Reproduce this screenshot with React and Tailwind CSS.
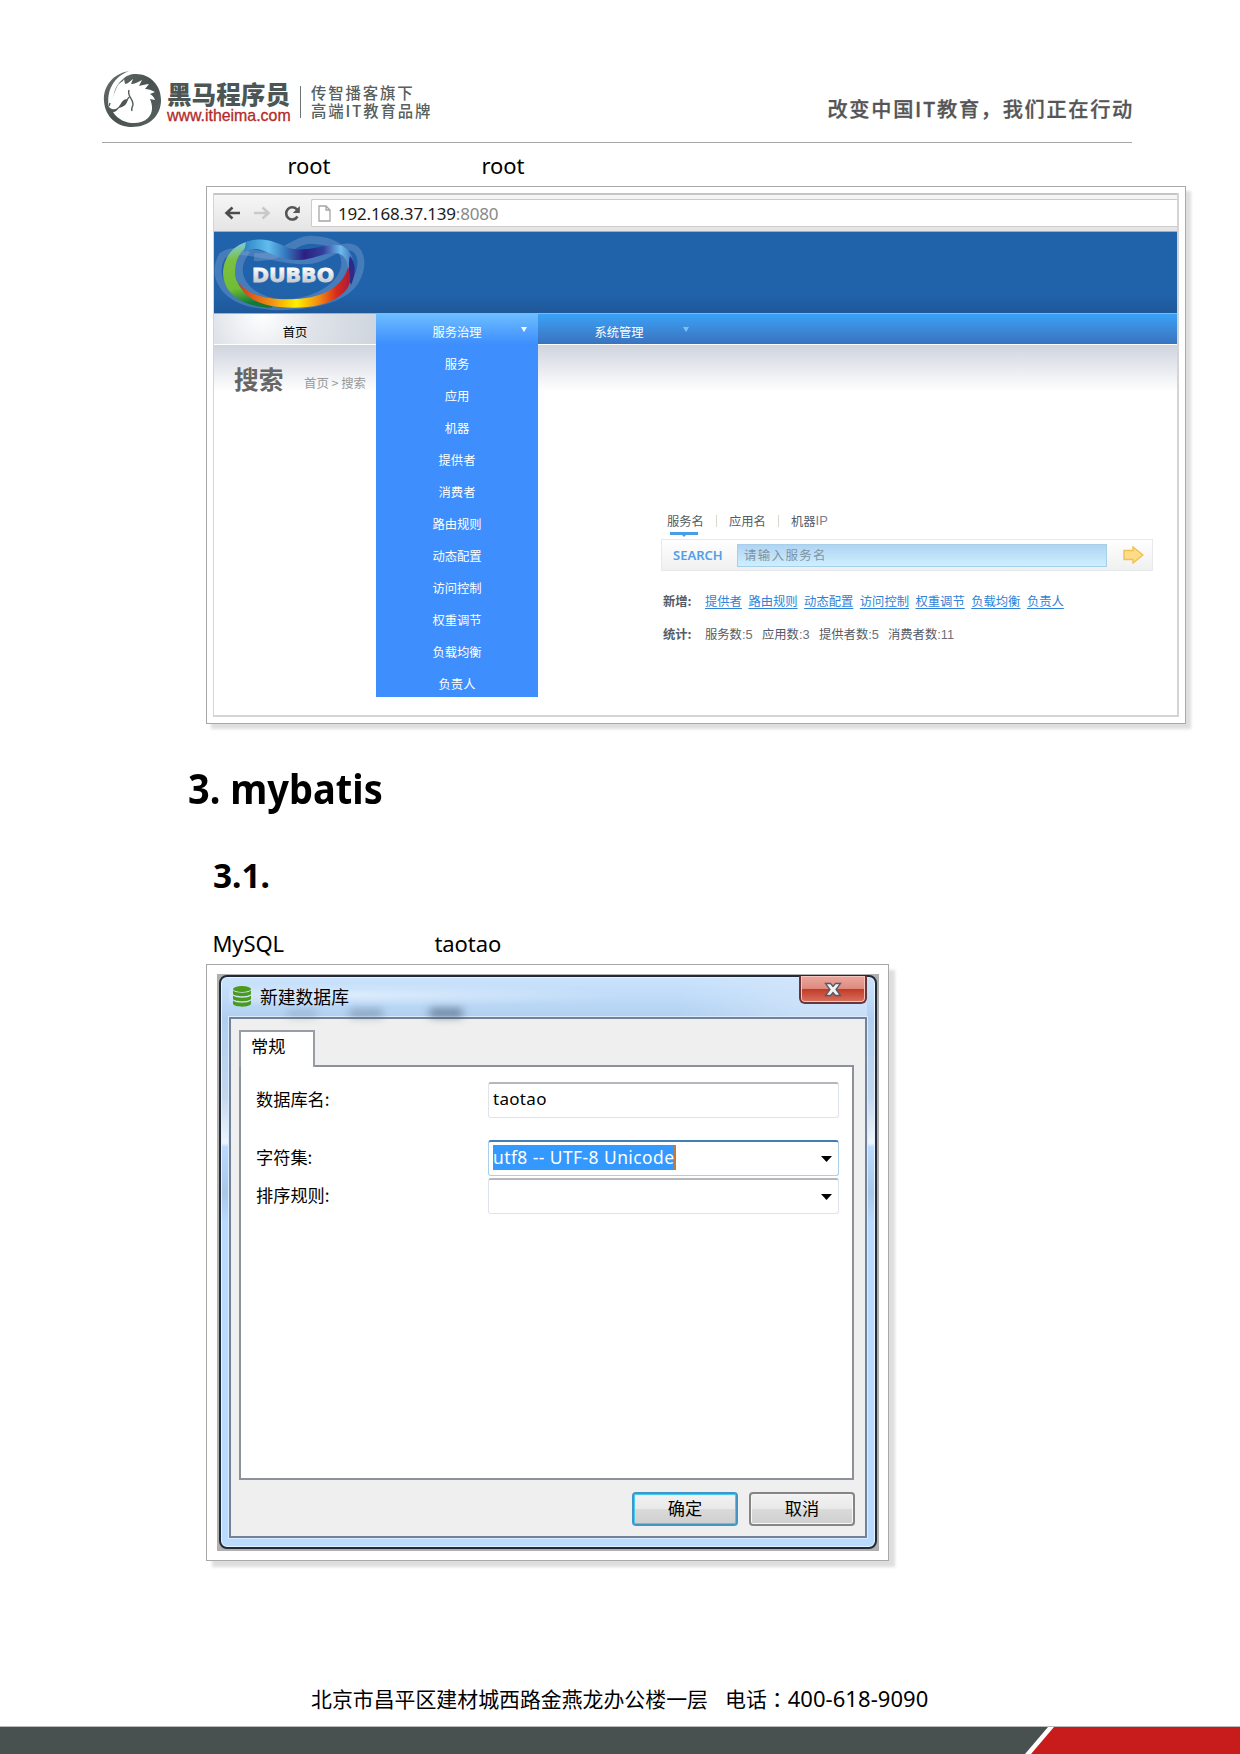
import React from "react";

const SERVICE_MENU = ["服务", "应用", "机器", "提供者", "消费者", "路由规则", "动态配置", "访问控制", "权重调节", "负载均衡", "负责人"];
const NEW_LINKS = ["提供者", "路由规则", "动态配置", "访问控制", "权重调节", "负载均衡", "负责人"];

function HorseLogo() {
  return (
    <svg className="mt-[3px] h-[62px] w-[62px] shrink-0" viewBox="0 0 62 62">
      <defs>
        <linearGradient id="ring" x1="0" y1="0" x2="1" y2="1">
          <stop offset="0" stopColor="#6a7372" />
          <stop offset="0.5" stopColor="#48514f" />
          <stop offset="1" stopColor="#5a6362" />
        </linearGradient>
      </defs>
      <path d="M27 1C10 4 1 17 2 31c1 16 13 26 28 26 17 0 29-11 29-27C59 15 48 4 34 4c-6 0-10 2-13 5-6 5-8 10-9 15-2 5-4 9-5 13-3-15 4-30 20-36z" fill="url(#ring)" />
      <path d="M12 24c2-5 3-9 6-11 1-1 3-1 4-4l1 5c3 0 5-3 8-5l-2 5c4 0 7-2 11-4l-3 6c4-1 7-2 10-2l-4 5c4 0 6 1 10 3l-5 2c2 1 4 3 5 6l-5-1c3 7 3 14-2 19-8 8-27 7-35-6 3 0 4-2 6-4 4-1 8-3 9-9-5 0-6 3-8 6-2 3-4 5-8 4-5-2-4-6-2-9 2-2 3-4 4-6z" fill="#fff" />
      <path d="M27 20c-2 7 4 8 4 14 0 3-2 3-1 7M27 27c-3 5-5 8-9 9M8 33l-1 3" fill="none" stroke="#535c5b" strokeWidth="1.4" />
    </svg>
  );
}

function DubboLogo() {
  return (
    <svg className="h-[81px] w-[160px]" viewBox="0 0 160 81">
      <defs>
        <linearGradient id="green" x1="0.6" y1="0" x2="0.75" y2="1">
          <stop offset="0" stopColor="#7ecbe0" />
          <stop offset="0.22" stopColor="#7cc040" />
          <stop offset="0.65" stopColor="#70bd35" />
          <stop offset="0.9" stopColor="#0f7a3a" />
        </linearGradient>
        <linearGradient id="blue" x1="0" x2="1">
          <stop offset="0" stopColor="#2a85c5" />
          <stop offset="0.22" stopColor="#62bdee" />
          <stop offset="0.38" stopColor="#3477bd" />
          <stop offset="0.55" stopColor="#2c2080" />
          <stop offset="0.72" stopColor="#32409c" />
          <stop offset="0.88" stopColor="#6cbcec" />
          <stop offset="1" stopColor="#3a6cb8" />
        </linearGradient>
        <linearGradient id="fire" x1="0" x2="1">
          <stop offset="0" stopColor="#cf3a20" />
          <stop offset="0.28" stopColor="#f08a12" />
          <stop offset="0.52" stopColor="#fff000" />
          <stop offset="0.72" stopColor="#f38a12" />
          <stop offset="0.88" stopColor="#d72a1c" />
          <stop offset="1" stopColor="#a81c38" />
        </linearGradient>
        <linearGradient id="word" x1="0" y1="0" x2="0" y2="1">
          <stop offset="0.2" stopColor="#ffffff" />
          <stop offset="1" stopColor="#b4b7be" />
        </linearGradient>
      </defs>
      <g fill="none" stroke="#8fb0d8" strokeOpacity="0.33">
        <path d="M8 24C-3 44 10 66 40 72c36 7 86 0 101-22 10-17 7-36-8-35-14 1-18 10-34 13C70 33 24 10 8 24z" strokeWidth="7" />
        <path d="M33 18C16 38 26 62 58 70c36 5 68-12 73-35 3-20-14-26-31-27C78 6 72 27 40 25" strokeWidth="8" />
      </g>
      <path d="M52 9C30 5 10 18 9 40c0 20 16 34 48 36l2-2C38 69 21 56 21 40c0-14 7-25 21-30z" fill="url(#green)" />
      <path d="M32 10c18-6 29 0 43 6 14 4 28-1 43-3 18-2 26 16 20 34l-4-8c0-12-5-19-16-18-15 2-23 8-39 7C61 26 53 18 42 17c-4 0-8 1-12 3z" fill="url(#blue)" />
      <path d="M136 24c8 10 4 22 1 29l-3-9c2-8 0-14 2-20z" fill="#302986" />
      <path d="M24 50c11 15 34 18 58 17 28-1 48-14 52-32 4 11 3 21-7 28-15 12-39 14-62 12-22-2-36-11-41-25z" fill="url(#fire)" />
      <text x="38" y="50" fill="url(#word)" stroke="url(#word)" strokeWidth="0.8" fontFamily="DejaVu Sans" fontWeight="700" fontSize="20" textLength="82" lengthAdjust="spacingAndGlyphs">DUBBO</text>
    </svg>
  );
}

function BrowserBar() {
  return (
    <div className="flex h-[39px] shrink-0 flex-col border-t-2 border-[#c3c7ca] bg-linear-to-b from-[#f6f6f6] to-[#e4e4e4]">
      <div className="mt-1 flex h-[28px] items-center pl-[10px]">
        <svg className="h-[18px] w-[78px] shrink-0" viewBox="0 0 78 18" fill="none" strokeWidth="2.6">
          <path d="M16 9H3M8.500 3.500L2.500 9l6 5.500" stroke="#4c4c4c" />
          <path d="M30 9h13M38.500 3.500L44.500 9l-6 5.500" stroke="#c9c9c9" />
          <path d="M73.500 12.500A6.100 6.100 0 1 1 73 5.500" stroke="#555" />
          <path d="M75.800 2v7h-7z" fill="#555" />
        </svg>
        <div className="ml-[9px] flex h-[28px] grow items-center rounded-l-[2px] border border-r-0 border-[#cbcbcb] bg-white pl-[6px]">
          <svg className="h-[17px] w-[13px]" viewBox="0 0 13 17" fill="none" stroke="#a5a5a5" strokeWidth="1.300">
            <path d="M1 1h7l4 4v11H1zM8 1v4h4" />
          </svg>
          <div className="ml-[7px] font-['Noto_Sans'] text-[17px] leading-none tracking-[-0.2px] whitespace-nowrap text-[#1c1c1c]">
            192.168.37.139<span className="text-[#888]">:8080</span>
          </div>
        </div>
      </div>
      <div className="mt-auto h-px bg-[#a9adb2]" />
    </div>
  );
}

function Caret({ className }) {
  return (
    <svg className={className} viewBox="0 0 6 5" preserveAspectRatio="none">
      <path d="M0 0h6L3 5z" fill="currentColor" />
    </svg>
  );
}

function Nav() {
  return (
    <div className="flex h-[31px] shrink-0 border-t border-[#7fb9ea] bg-linear-to-b from-[#3aa2f7] to-[#3a73bf] text-[12.3px] text-white">
      <div className="flex w-[162px] items-center justify-center bg-[radial-gradient(circle_at_30%_0%,#fff_0%,#dfe3e9_45%,#cfd5df_100%)] pt-[6px] text-black">首页</div>
      <div className="relative flex w-[162px] items-center justify-center bg-linear-to-b from-[#6dbdff] to-[#3e8efd] pt-[6px]">
        服务治理
        <Caret className="absolute top-[13px] left-[145px] h-[5px] w-[6px]" />
        <div className="absolute top-[30px] left-0 z-10 flex h-[353px] w-[162px] flex-col bg-[#3e8efd] pt-[4px]">
          {SERVICE_MENU.map((label) => (
            <div key={label} className="flex h-[32px] shrink-0 items-center justify-center">{label}</div>
          ))}
        </div>
      </div>
      <div className="relative flex w-[162px] items-center justify-center pt-[6px]">
        系统管理
        <Caret className="absolute top-[13px] left-[145px] h-[5px] w-[6px] text-[#7cc1f5]" />
      </div>
    </div>
  );
}

function SearchArea() {
  return (
    <div className="ml-[447px] text-[12.3px] leading-[20px] whitespace-nowrap text-[#555b66]">
      <div className="flex h-[28px] pl-[6px]">
        <div className="w-[37px]">
          服务名
          <svg className="ml-[3px] block h-[6px] w-[28px]" viewBox="0 0 28 6">
            <path d="M0 1h28v3H16l-2 2-2-2H0z" fill="#459ee6" />
          </svg>
        </div>
        <div className="mt-[4px] ml-[12px] h-[12px] w-px bg-[#d5dad0]" />
        <div className="ml-[12px]">应用名</div>
        <div className="mt-[4px] ml-[12px] h-[12px] w-px bg-[#d5dad0]" />
        <div className="ml-[12px] flex">机器<span className="font-['Liberation_Sans'] text-[13px] text-[#7d7d90]">IP</span></div>
      </div>
      <div className="flex h-[32px] w-[492px] items-center border border-[#e6eaec] bg-linear-to-b from-white to-[#f0f0f0] pl-[11px]">
        <div className="w-[64px] font-['Noto_Sans'] text-[13px] font-semibold text-[#509fe8]">SEARCH</div>
        <div className="flex h-[23px] w-[370px] items-center border border-[#a8cfe8] bg-linear-to-b from-[#b0d3f3] to-[#cdf0ff] pl-[6px] text-[12.5px] tracking-[1.3px] text-[#7f93a5]">请输入服务名</div>
        <svg className="ml-[16px] h-[18px] w-[21px]" viewBox="0 0 21 18">
          <path d="M1 4.500h9V1l10 8-10 8v-3.500H1z" fill="#fedb87" stroke="#efc150" strokeWidth="1.400" />
        </svg>
      </div>
      <div className="mt-[20px] flex pl-[2px]">
        <div className="w-[42px] font-bold">新增:</div>
        <div className="flex gap-[6.5px] text-[#2f82d8]">
          {NEW_LINKS.map((label) => (
            <span key={label} className="underline underline-offset-2">{label}</span>
          ))}
        </div>
      </div>
      <div className="mt-[13px] flex pl-[2px]">
        <div className="w-[42px] font-bold">统计:</div>
        <div className="w-[57px]">服务数<Count>:5</Count></div>
        <div className="w-[57px]">应用数<Count>:3</Count></div>
        <div className="w-[69px]">提供者数<Count>:5</Count></div>
        <div>消费者数<Count>:11</Count></div>
      </div>
    </div>
  );
}

function Count({ children }) {
  return <span className="font-['Liberation_Sans'] text-[12.8px] text-[#6e6e7a]">{children}</span>;
}

function DubboPanel() {
  return (
    <div className="ml-[206px] flex h-[538px] w-[980px] shrink-0 flex-col border border-[#a8a8a8] bg-white pt-[6px] pl-[6px] shadow-[5px_5px_3px_#dedede]">
      <div className="flex h-[524px] w-[966px] flex-col border-r-2 border-b-2 border-l border-[#d4d4d4]">
        <BrowserBar />
        <div className="h-[81px] shrink-0 bg-linear-to-b from-[#2163ab] from-75% to-[#1e5899]">
          <DubboLogo />
        </div>
        <Nav />
        <div className="grow border-t border-white bg-linear-to-b from-[#cfd4de] to-white to-[46px]">
          <div className="flex h-[166px] items-start pl-[20px]">
            <div className="mt-[15px] w-[70px] text-[24.7px] leading-[36px] font-bold text-[#666]">搜索</div>
            <div className="mt-[28px] text-[12.4px] leading-[20px] text-[#999]">首页 &gt; 搜索</div>
          </div>
          <SearchArea />
        </div>
      </div>
    </div>
  );
}

function SelectArrow() {
  return <Caret className="mr-[6px] ml-auto h-[6px] w-[11px] text-black" />;
}

function DatabaseIcon() {
  return (
    <svg className="h-[21px] w-[18px]" viewBox="0 0 18 21" fill="#4a9a1c">
      <ellipse cx="9" cy="3" rx="9" ry="3" />
      <path d="M0 4.500c3 3 15 3 18 0V8c-2 3-16 3-18 0z" />
      <path d="M0 9.500c3 3 15 3 18 0V13c-2 3-16 3-18 0z" />
      <path d="M0 14.500c3 3 15 3 18 0V18c-2 3.500-16 3.500-18 0z" />
    </svg>
  );
}

function DialogPanel() {
  return (
    <div className="ml-[206px] flex h-[597px] w-[683px] shrink-0 flex-col border border-[#a8a8a8] bg-white pt-[9px] pl-[10px] shadow-[6px_6px_3px_#dedede]">
      <div className="h-[577px] w-[662px] bg-[#b0b0b0] pt-px pl-[2px]">
        <div className="flex h-[574px] w-[658px] flex-col rounded-[8px] border-2 border-[#222b35] bg-[linear-gradient(180deg,#cbe3fc_0px,#bfdbf8_20px,#b0cff0_42px,#c4d8ee_120px,#eef5fd_166px,#b9dbff_170px,#a9c8e8_216px,#b9dbff_245px)] px-[8px] text-[17.2px] leading-[24px] text-black ring-1 ring-[#e6f2ff] ring-inset">
          <div className="relative flex h-[40px] shrink-0 items-start bg-[radial-gradient(ellipse_at_18%_45%,#e4f0fdcc_0%,#d8e9fb80_20%,transparent_38%),linear-gradient(90deg,transparent_70%,#d6e8fc99_90%)] pt-[9px] pl-[4px]">
            <div className="absolute bottom-0 left-[58px] h-[6px] w-[30px] rounded-full bg-[#526b84]/35 blur-[4px]" />
            <div className="absolute bottom-0 left-[120px] h-[7px] w-[34px] rounded-full bg-[#526b84]/55 blur-[4px]" />
            <div className="absolute bottom-0 left-[200px] h-[8px] w-[34px] rounded-full bg-[#425b74]/75 blur-[4px]" />
            <DatabaseIcon />
            <div className="relative mt-[-2px] ml-[9px] text-[17.8px]">新建数据库</div>
            <div className="absolute top-[-1px] right-0 flex h-[28px] w-[68px] items-center justify-center rounded-b-[6px] border-2 border-t-0 border-[#6b3537] bg-[linear-gradient(180deg,#eda79d_0%,#dd8b80_48%,#c33a25_50%,#d77260_100%)] ring-1 ring-[#f4c4bd] ring-inset">
              <svg className="h-[15px] w-[18px]" viewBox="0 0 18 15">
                <path d="M1.500 1.500h5L9 4.500l2.500-3h5L12 7.500l4.500 6h-5L9 10.500l-2.500 3h-5L6 7.500z" fill="#f4f4f4" stroke="#505a6c" strokeWidth="1.300" />
              </svg>
            </div>
          </div>
          <div className="h-[521px] w-[638px] shrink-0 border-2 border-[#70839a] bg-[#efefef] pt-[11px] pl-[8px] ring-1 ring-[#dcebfa]">
            <div className="relative z-10 mb-[-2px] h-[37px] w-[76px] border-2 border-b-0 border-[#989ca4] bg-white pt-[2px] pl-[10px]">常规</div>
            <div className="flex h-[415px] w-[615px] flex-col border-2 border-[#8d9199] bg-white pt-[15px] pl-[15px]">
              <div className="flex h-[36px] shrink-0 items-center">
                <div className="mt-[-2px] w-[232px]">数据库名:</div>
                <div className="flex h-[36px] w-[351px] items-center rounded-[3px] border border-t-2 border-[#dfe4ec] border-t-[#b5b7bd] pb-[3px] pl-[4px] font-['Noto_Sans'] text-[17px] tracking-[0.3px]">taotao</div>
              </div>
              <div className="mt-[22px] flex h-[36px] shrink-0 items-center">
                <div className="mt-[-2px] w-[232px]">字符集:</div>
                <div className="flex h-[36px] w-[351px] items-center rounded-[3px] border border-t-2 border-[#a9cfe9] border-t-[#3f7fb5] pl-[4px]">
                  <div className="mt-[-3px] h-[25px] w-[183px] border-r-2 border-[#c67a3a] bg-[#3399ff] font-['Noto_Sans'] text-[17.4px] leading-[24px] tracking-[0.45px] whitespace-nowrap text-white">utf8 -- UTF-8 Unicode</div>
                  <SelectArrow />
                </div>
              </div>
              <div className="mt-[2px] flex h-[36px] shrink-0 items-center">
                <div className="mt-[-2px] w-[232px]">排序规则:</div>
                <div className="flex h-[36px] w-[351px] items-center rounded-[3px] border border-t-2 border-[#dfe4ec] border-t-[#b5b7bd]">
                  <SelectArrow />
                </div>
              </div>
            </div>
            <div className="mt-[12px] flex gap-[11px] pl-[393px]">
              <div className="flex h-[34px] w-[106px] items-center justify-center rounded-[4px] border-2 border-[#4595c4] bg-[linear-gradient(180deg,#f2f2f2_0%,#e9e9e9_50%,#dadada_51%,#cfcfcf_100%)] pb-[2px] ring-1 ring-[#43cdf5] ring-inset">确定</div>
              <div className="flex h-[34px] w-[106px] items-center justify-center rounded-[4px] border-2 border-[#858585] bg-[linear-gradient(180deg,#f2f2f2_0%,#e9e9e9_50%,#dadada_51%,#cfcfcf_100%)] pb-[2px] ring-1 ring-[#f7f7f7] ring-inset">取消</div>
            </div>
          </div>
        </div>
      </div>
    </div>
  );
}

export default function App() {
  return (
    <div className="flex h-[1754px] w-[1240px] flex-col overflow-hidden bg-white font-['Noto_Sans_CJK_SC',sans-serif] text-black">
      <header className="ml-[102px] flex h-[143px] w-[1030px] shrink-0 items-start border-b border-[#a6a6a6] pt-[67px]">
        <HorseLogo />
        <div className="ml-[3px] w-[123px] whitespace-nowrap">
          <div className="mt-[14px] text-[24.6px] leading-[25px] font-black text-[#4c5755]">黑马程序员</div>
          <div className="mt-px font-['Liberation_Sans'] text-[15.9px] leading-[17px] text-[#b22a2a] [-webkit-text-stroke:0.3px_#b22a2a]">www.itheima.com</div>
        </div>
        <div className="mt-[19px] ml-[10px] h-[32px] w-px bg-[#6b7472]" />
        <div className="mt-[16px] ml-[10px] text-[15.4px] leading-[18px] font-medium tracking-[1.85px] whitespace-nowrap text-[#56605e]">
          <div>传智播客旗下</div>
          <div>高端IT教育品牌</div>
        </div>
        <div className="mt-[27px] mr-[-2px] ml-auto text-[20.2px] leading-[30px] font-medium tracking-[1.7px] whitespace-nowrap text-[#555] [-webkit-text-stroke:0.3px_#555]">改变中国IT教育，我们正在行动</div>
      </header>
      <div className="flex h-[43px] shrink-0 pt-[7px] pl-[287.5px] font-['Noto_Sans'] text-[22px] leading-[30px] tracking-[-0.1px]">
        <div className="w-[194px]">root</div>
        <div>root</div>
      </div>
      <DubboPanel />
      <h1 className="mt-[38px] ml-[188px] h-[52px] w-[300px] shrink-0 origin-left scale-x-[0.905] font-['Noto_Sans'] text-[42px] leading-[52px] font-bold whitespace-nowrap">3. mybatis</h1>
      <h2 className="mt-[41px] ml-[213px] h-[40px] shrink-0 font-['Noto_Sans'] text-[33.4px] leading-[40px] font-bold">3.1.</h2>
      <div className="mt-[33px] flex h-[36px] shrink-0 pl-[212.5px] font-['Noto_Sans'] text-[22px] leading-[30px] tracking-[-0.1px]">
        <div className="w-[222px]">MySQL</div>
        <div>taotao</div>
      </div>
      <DialogPanel />
      <footer className="mt-auto shrink-0">
        <div className="flex h-[43px] pl-[311px] text-[20.9px] leading-[30px] whitespace-nowrap">
          <div className="w-[414px]">北京市昌平区建材城西路金燕龙办公楼一层</div>
          <div>电话<span className="font-['Noto_Sans_CJK_TC']">：</span></div>
          <div className="font-['Noto_Sans'] text-[22px] tracking-[0.05px]">400-618-9090</div>
        </div>
        <div className="flex h-[28px] border-t border-[#b8bdbc] bg-white">
          <div className="mr-[-17px] w-[1048px] bg-[#48514f] [clip-path:polygon(0_0,100%_0,1025px_100%,0_100%)]" />
          <div className="grow bg-[#c81b1c] [clip-path:polygon(23px_0,100%_0,100%_100%,0_100%)]" />
        </div>
      </footer>
    </div>
  );
}
